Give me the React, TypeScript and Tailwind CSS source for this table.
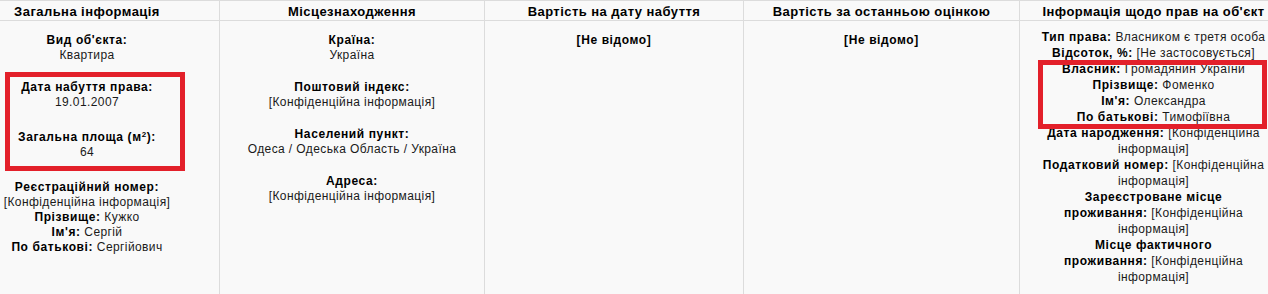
import React from "react";

const Lbl = ({ children }: { children: React.ReactNode }) => (
  <b className="font-bold text-black tracking-[0.6px]">{children}</b>
);

const conf = "[Конфіденційна інформація]";

const Line = ({ children }: { children: React.ReactNode }) => (
  <div className="whitespace-nowrap">{children}</div>
);

export default function App() {
  return (
    <div className="relative w-[1268px] h-[294px] overflow-hidden bg-[#f9f9f9] font-['Liberation_Sans',Arial,sans-serif] text-[12px] tracking-[0.4px] text-[#1a1a1a]">
      <div className="ml-[-45px] w-[1332px] grid grid-cols-[264px_265px_259px_276px_268px]">
        {[
          "Загальна інформація",
          "Місцезнаходження",
          "Вартість на дату набуття",
          "Вартість за останньою оцінкою",
          "Інформація щодо прав на об'єкт",
        ].map((h, i) => (
          <div
            key={h}
            className={
              "border-t border-b border-[#dcdcdc] pt-[3px] h-[21px] box-border text-center font-bold text-[13px] tracking-[0.45px] leading-[16px] text-black whitespace-nowrap " +
              (i > 0 ? "border-l" : "")
            }
          >
            {h}
          </div>
        ))}

        {/* Col 1 */}
        <div className="h-[273px] pt-[12px] text-center leading-[15px]">
          <div className="mb-[17px]">
            <Line><Lbl>Вид об'єкта:</Lbl></Line>
            <Line>Квартира</Line>
          </div>
          <div className="mb-[17px]">
            <Line><Lbl>Дата набуття права:</Lbl></Line>
            <Line>19.01.2007</Line>
          </div>
          <div className="mb-[20px] pt-[2px]">
            <div className="leading-[16px] whitespace-nowrap">
              <Lbl>
                Загальна площа (м<sup className="text-[8px]">2</sup>):
              </Lbl>
            </div>
            <Line>64</Line>
          </div>
          <div>
            <Line><Lbl>Реєстраційний номер:</Lbl></Line>
            <Line>{conf}</Line>
            <Line><Lbl>Прізвище:</Lbl> Кужко</Line>
            <Line><Lbl>Ім'я:</Lbl> Сергій</Line>
            <Line><Lbl>По батькові:</Lbl> Сергійович</Line>
          </div>
        </div>

        {/* Col 2 */}
        <div className="h-[273px] border-l border-[#dcdcdc] pt-[12px] text-center leading-[15px]">
          <div className="mb-[17px]">
            <Line><Lbl>Країна:</Lbl></Line>
            <Line>Україна</Line>
          </div>
          <div className="mb-[17px]">
            <Line><Lbl>Поштовий індекс:</Lbl></Line>
            <Line>{conf}</Line>
          </div>
          <div className="mb-[17px]">
            <Line><Lbl>Населений пункт:</Lbl></Line>
            <Line>Одеса / Одеська Область / Україна</Line>
          </div>
          <div>
            <Line><Lbl>Адреса:</Lbl></Line>
            <Line>{conf}</Line>
          </div>
        </div>

        {/* Col 3 */}
        <div className="h-[273px] border-l border-[#dcdcdc] pt-[12px] text-center leading-[15px]">
          <Lbl>[Не відомо]</Lbl>
        </div>

        {/* Col 4 */}
        <div className="h-[273px] border-l border-[#dcdcdc] pt-[12px] text-center leading-[15px]">
          <Lbl>[Не відомо]</Lbl>
        </div>

        {/* Col 5 */}
        <div className="h-[273px] border-l border-[#dcdcdc] pt-[8px] text-center leading-[16px]">
          <Line><Lbl>Тип права:</Lbl> Власником є третя особа</Line>
          <Line><Lbl>Відсоток, %:</Lbl> [Не застосовується]</Line>
          <Line><Lbl>Власник:</Lbl> Громадянин України</Line>
          <Line><Lbl>Прізвище:</Lbl> Фоменко</Line>
          <Line><Lbl>Ім'я:</Lbl> Олександра</Line>
          <Line><Lbl>По батькові:</Lbl> Тимофіївна</Line>
          <Line><Lbl>Дата народження:</Lbl> [Конфіденційна</Line>
          <Line>інформація]</Line>
          <Line><Lbl>Податковий номер:</Lbl> [Конфіденційна</Line>
          <Line>інформація]</Line>
          <Line><Lbl>Зареєстроване місце</Lbl></Line>
          <Line><Lbl>проживання:</Lbl> [Конфіденційна</Line>
          <Line>інформація]</Line>
          <Line><Lbl>Місце фактичного</Lbl></Line>
          <Line><Lbl>проживання:</Lbl> [Конфіденційна</Line>
          <Line>інформація]</Line>
        </div>
      </div>

      {/* Red annotation boxes */}
      <div className="pointer-events-none absolute left-[5px] top-[72px] w-[180px] h-[99px] border-[5px] border-[#e3202a]" />
      <div className="pointer-events-none absolute left-[1038px] top-[60px] w-[229px] h-[69px] border-[5px] border-[#e3202a]" />
    </div>
  );
}
